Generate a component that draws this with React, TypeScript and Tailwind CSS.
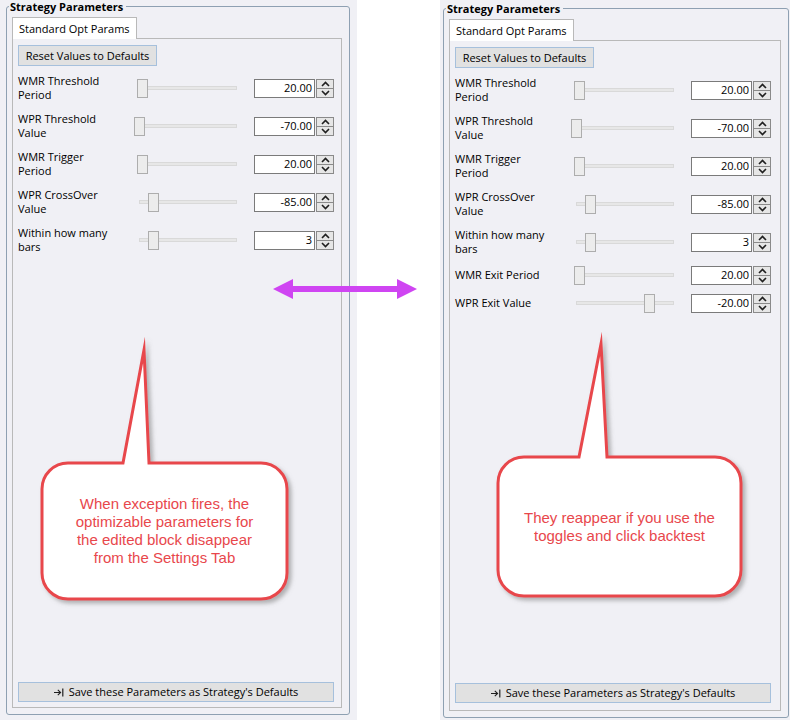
import React from "react";

type Row = { label: string[]; value: string; track: number; thumb: number };

const baseRows: Row[] = [
  { label: ["WMR Threshold", "Period"], value: "20.00", track: 3, thumb: 3 },
  { label: ["WPR Threshold", "Value"], value: "-70.00", track: 0, thumb: 0 },
  { label: ["WMR Trigger", "Period"], value: "20.00", track: 3, thumb: 3 },
  { label: ["WPR CrossOver", "Value"], value: "-85.00", track: 5, thumb: 14 },
  { label: ["Within how many", "bars"], value: "3", track: 5, thumb: 14 },
];

const fullRows: Row[] = [
  ...baseRows,
  { label: ["WMR Exit Period"], value: "20.00", track: 3, thumb: 3 },
  { label: ["WPR Exit Value"], value: "-20.00", track: 5, thumb: 73 },
];

function Spinner() {
  return (
    <div className="ml-px flex h-[19px] w-[18px] flex-col border border-[#8a8a8a] bg-[#e6e6e6]">
      <div className="flex flex-1 items-center justify-center border-b border-[#8a8a8a]">
        <svg width="9" height="6" viewBox="0 0 9 6">
          <path d="M1 5 L4.5 1.5 L8 5" fill="none" stroke="#1f1f1f" strokeWidth="1.6" />
        </svg>
      </div>
      <div className="flex flex-1 items-center justify-center">
        <svg width="9" height="6" viewBox="0 0 9 6">
          <path d="M1 1 L4.5 4.5 L8 1" fill="none" stroke="#1f1f1f" strokeWidth="1.6" />
        </svg>
      </div>
    </div>
  );
}

function Slider({ track, thumb }: { track: number; thumb: number }) {
  return (
    <div className="relative h-[19px] w-[103px]">
      <div
        className="absolute right-0 top-[7px] h-[4px] border border-[#d9d9d9] bg-[#e7e7e7]"
        style={{ left: track }}
      />
      <div
        className="absolute top-0 h-[19px] w-[11px] border border-[#adadad] bg-[#ececec]"
        style={{ left: thumb }}
      />
    </div>
  );
}

function ParamRow({ row }: { row: Row }) {
  const twoLines = row.label.length > 1;
  return (
    <div className={`flex items-center ${twoLines ? "h-[38px]" : "h-[28px]"}`}>
      <div className="w-[116px] whitespace-nowrap leading-[14px]">
        {row.label.map((l) => (
          <div key={l}>{l}</div>
        ))}
      </div>
      <Slider track={row.track} thumb={row.thumb} />
      <div className="ml-[17px] flex h-[19px] w-[61px] items-center justify-end border border-[#7a7a7a] bg-white pr-[2px]">
        {row.value}
      </div>
      <Spinner />
    </div>
  );
}

function Panel({ rows, className, pageClass }: { rows: Row[]; className: string; pageClass: string }) {
  return (
    <div className={`flex flex-col bg-[#f0f0f5] ${className}`}>
      <fieldset className="flex min-h-0 flex-1 flex-col rounded-[3px] border border-[#8ea0b2]">
        <legend className="ml-[2px] pl-[1px] pr-[3px] font-bold leading-[13px]">
          Strategy Parameters
        </legend>
        <div className="flex flex-1 flex-col pb-[6px] pl-[5px] pr-[7px] pt-[4px]">
          <div className="flex">
            <div className="relative z-10 -mb-px h-[22px] w-[125px] border-x border-t border-[#b9b9b9] bg-white pl-[6px] leading-[21px]">
              Standard Opt Params
            </div>
          </div>
          <div className={`flex flex-1 flex-col border border-[#b9b9b9] px-[5px] pt-[6px] ${pageClass}`}>
            <button className="h-[21px] w-[139px] border border-[#a6c0dc] bg-[#e1e1e1] text-center leading-[19px]">
              Reset Values to Defaults
            </button>
            <div className="mt-[3px] flex flex-col">
              {rows.map((r) => (
                <ParamRow key={r.label.join(" ")} row={r} />
              ))}
            </div>
            <button className="mt-auto flex h-[20px] w-[316px] items-center justify-center gap-[5px] border border-[#a6c0dc] bg-[#e1e1e1]">
              <svg width="10" height="9" viewBox="0 0 10 9">
                <path d="M0 4.5 H6.5 M3.8 1.8 L6.6 4.5 L3.8 7.2" fill="none" stroke="#1f1f1f" strokeWidth="1.1" />
                <path d="M8.8 0.5 V8.5" stroke="#1f1f1f" strokeWidth="1.2" />
              </svg>
              <span>Save these Parameters as Strategy's Defaults</span>
            </button>
          </div>
        </div>
      </fieldset>
    </div>
  );
}

function Overlay() {
  const red = "#e8474c";
  return (
    <svg
      className="pointer-events-none absolute left-0 top-0"
      width="799"
      height="720"
      viewBox="0 0 799 720"
    >
      <defs>
        <filter id="shadow" x="-20%" y="-20%" width="140%" height="140%">
          <feDropShadow dx="3" dy="3" stdDeviation="2" floodColor="#7a7a7a" floodOpacity="0.55" />
        </filter>
      </defs>
      <path
        d="M68 463 H123 L144 350 L149 463 H261 A26 26 0 0 1 287 489 V573 A26 26 0 0 1 261 599 H68 A26 26 0 0 1 42 573 V489 A26 26 0 0 1 68 463 Z"
        fill="#fff"
        stroke={red}
        strokeWidth="3"
        strokeMiterlimit="20"
        filter="url(#shadow)"
      />
      <path
        d="M524 457 H579 L601 344 L607 457 H715 A26 26 0 0 1 741 483 V570 A26 26 0 0 1 715 596 H524 A26 26 0 0 1 498 570 V483 A26 26 0 0 1 524 457 Z"
        fill="#fff"
        stroke={red}
        strokeWidth="3"
        strokeMiterlimit="20"
        filter="url(#shadow)"
      />
      <polygon
        points="273,289 293,279 293,286 397,286 397,279 417,289 397,299 397,292 293,292 293,299"
        fill="#cf45f2"
      />
    </svg>
  );
}

export default function App() {
  return (
    <div className="relative flex h-[720px] w-[799px] bg-white font-['Open_Sans',sans-serif] text-[11px] text-black">
      <Panel rows={baseRows} pageClass="pb-[5px]" className="w-[357px] pb-[5px] pl-[6px] [&>fieldset]:w-[344px]" />
      <div className="w-[83px]" />
      <Panel rows={fullRows} pageClass="pb-[7px]" className="w-[350px] pb-[2px] pl-[3px] pt-[2px] [&>fieldset]:w-[346px]" />
      <Overlay />
      <div className="absolute left-[42px] top-[463px] flex h-[136px] w-[245px] items-center justify-center text-center font-['Liberation_Sans',Arial,sans-serif] text-[15px] leading-[18px] text-[#e8474c]">
        <div>
          When exception fires, the
          <br />
          optimizable parameters for
          <br />
          the edited block disappear
          <br />
          from the Settings Tab
        </div>
      </div>
      <div className="absolute left-[498px] top-[457px] flex h-[139px] w-[243px] items-center justify-center text-center font-['Liberation_Sans',Arial,sans-serif] text-[15px] leading-[18px] text-[#e8474c]">
        <div>
          They reappear if you use the
          <br />
          toggles and click backtest
        </div>
      </div>
    </div>
  );
}
